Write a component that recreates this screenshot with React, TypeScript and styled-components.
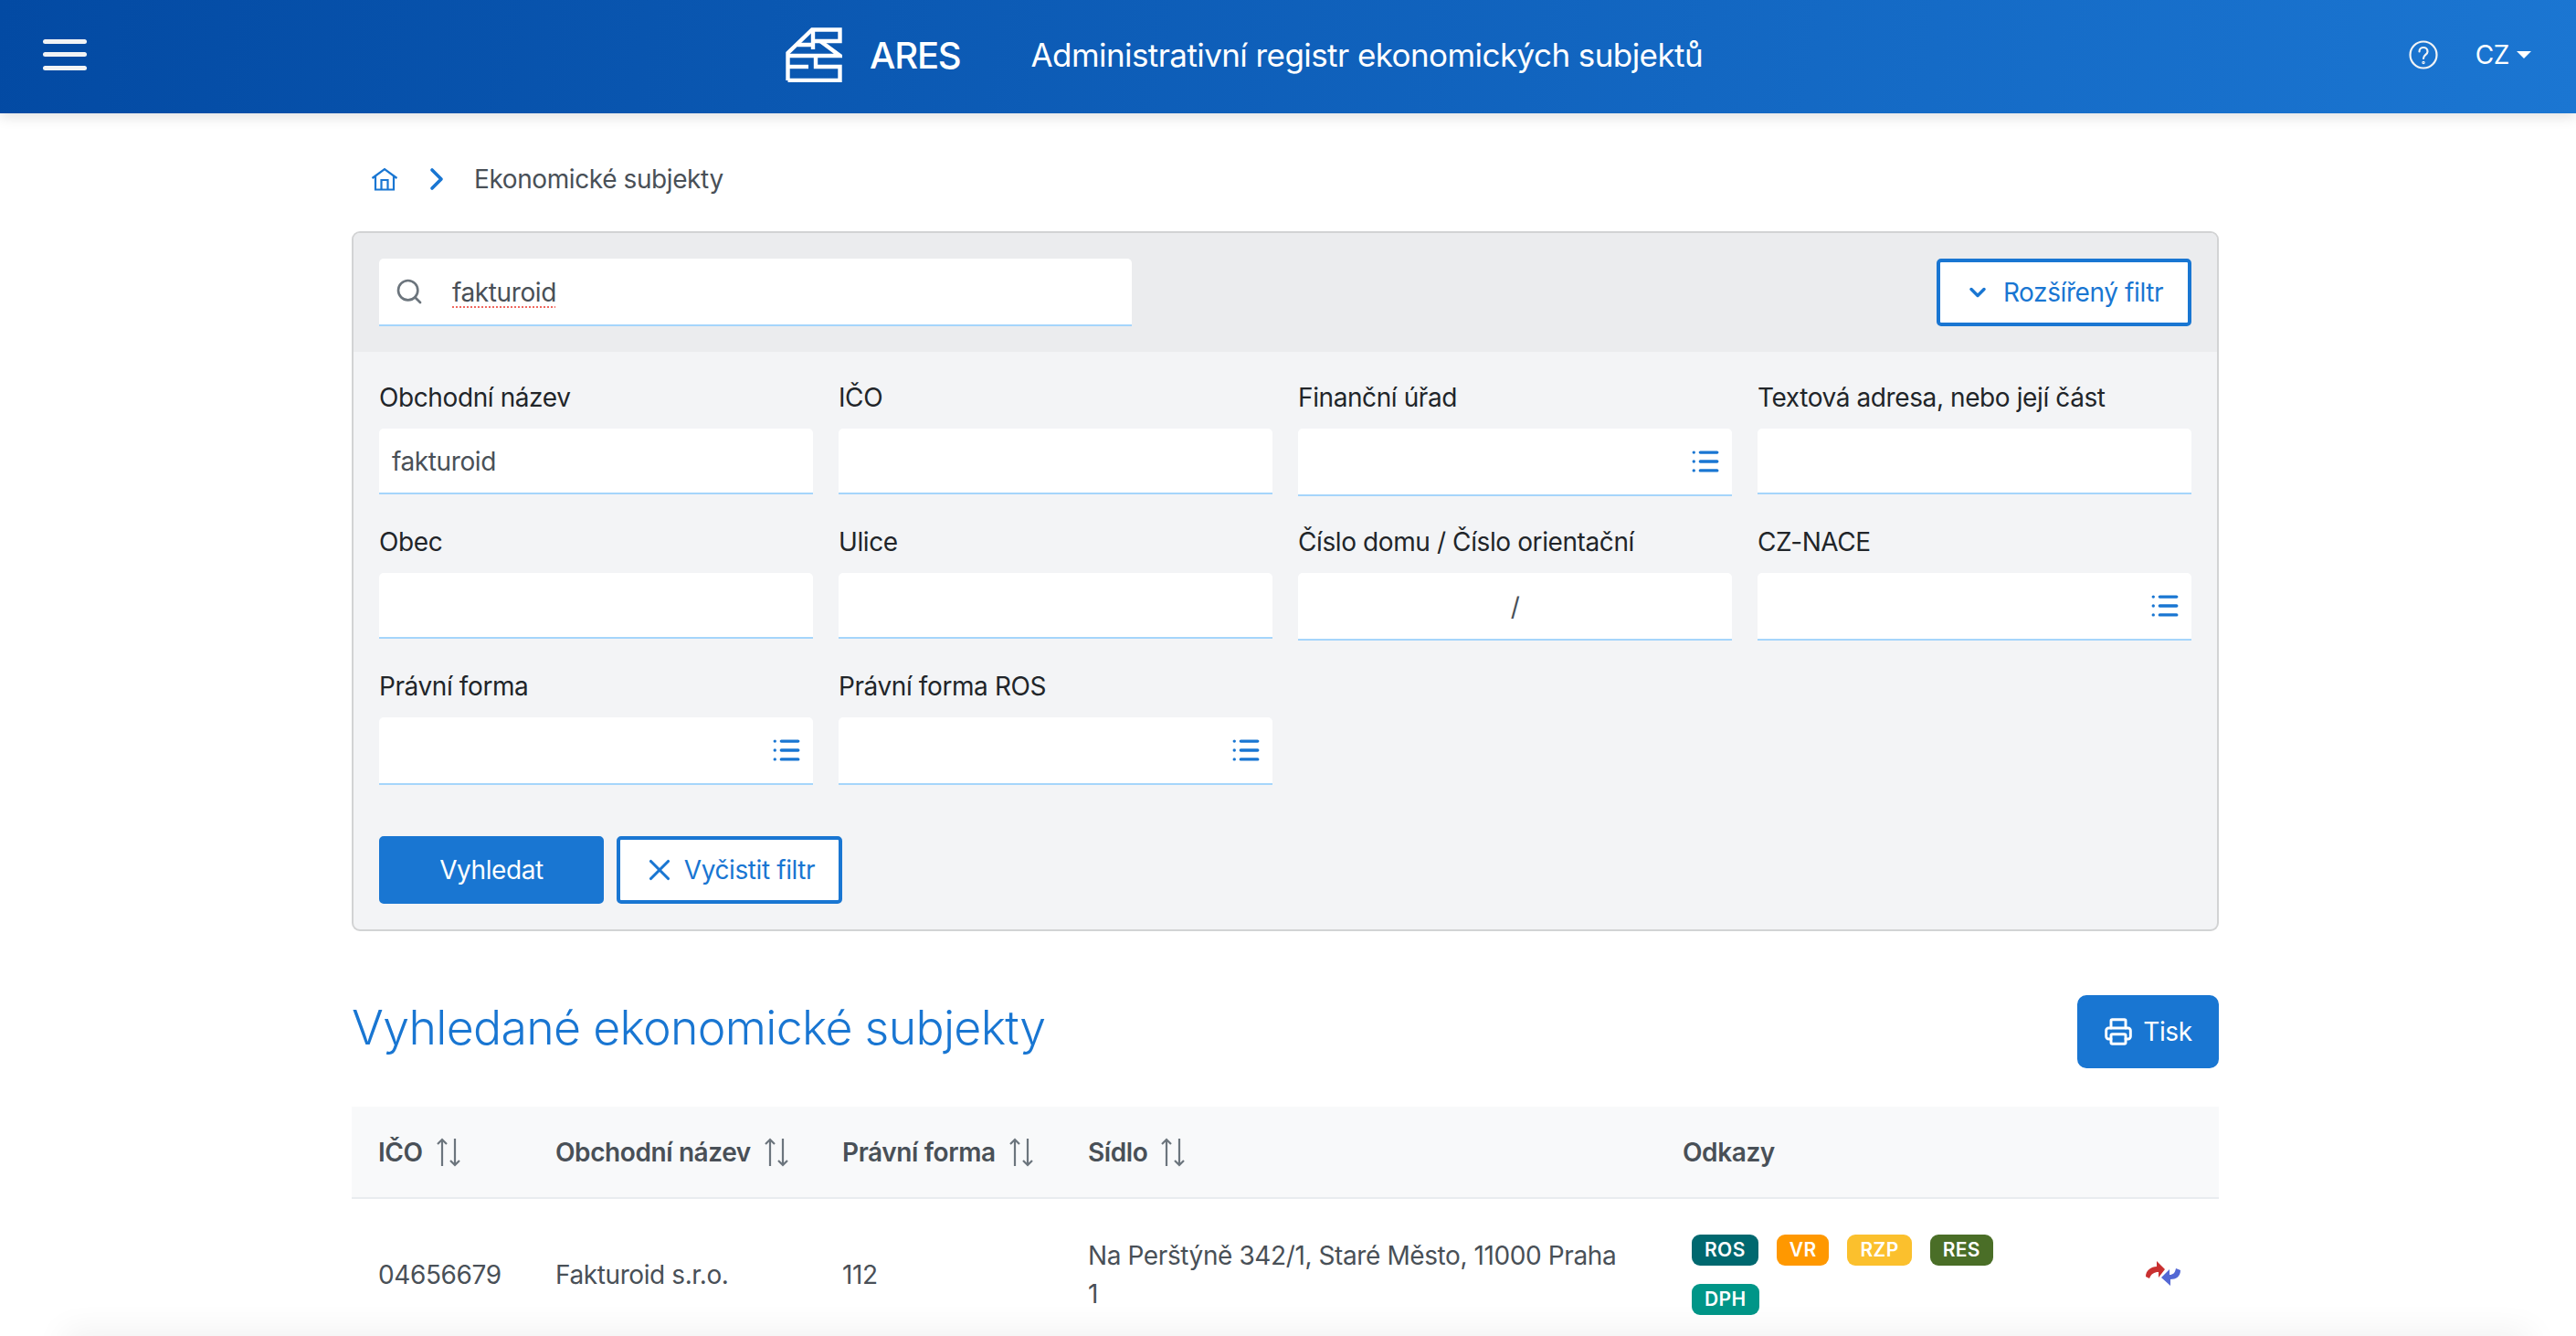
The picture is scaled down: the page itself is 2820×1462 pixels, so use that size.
import { FC } from "react";
import styled, { createGlobalStyle } from "styled-components";
import { ChevronDown, ChevronRight, List, Printer, Search, X } from "lucide-react";

const GlobalStyle = createGlobalStyle`
    html, body {
        margin: 0;
        height: 100%;
        overflow: hidden;
        background: #fff;
    }

    body {
        font-family: Inter, "Noto Sans", sans-serif;
        font-size: 28px;
        letter-spacing: -0.4px;
        color: #495057;
    }

    * {
        box-sizing: border-box;
    }
`

const Header = styled.header`
    height: 124px;
    padding-bottom: 5px;
    display: flex;
    align-items: center;
    background: linear-gradient(100deg, #034aa3 0%, #1b76d2 100%);
    box-shadow: 0 4px 14px rgba(0, 0, 0, 0.12);
    color: #fff;
    position: relative;
`

const MenuButton = styled.button`
    width: 48px;
    height: 34px;
    margin-left: 47px;
    padding: 0;
    display: flex;
    flex-direction: column;
    justify-content: space-between;
    background: none;
    border: 0;

    span {
        height: 5px;
        border-radius: 3px;
        background: #f1f3f5;
    }
`

const Brand = styled.div`
    display: flex;
    align-items: center;
    margin-left: 765px;
`

const BrandName = styled.span`
    margin: 2px 0 0 30px;
    font-size: 40px;
    font-weight: 500;
    letter-spacing: -1.2px;
`

const BrandTitle = styled.span`
    margin-left: 77px;
    font-size: 35px;
    font-weight: 400;
    letter-spacing: -0.57px;
`

const HeaderRight = styled.div`
    margin-left: auto;
    display: flex;
    align-items: center;
    padding-right: 49px;
`

const Lang = styled.span`
    margin-left: 41px;
    display: flex;
    align-items: center;

    &::after {
        content: "";
        margin-left: 8px;
        border-top: 8px solid #fff;
        border-left: 8px solid transparent;
        border-right: 8px solid transparent;
    }
`

const Main = styled.main`
    width: 2044px;
    margin-left: 385px;
`

const Breadcrumbs = styled.nav`
    height: 129px;
    padding: 14px 0 0 21px;
    display: flex;
    align-items: center;
    color: #1976d2;
`

const CrumbArrow = styled(ChevronRight)`
    margin-left: 22px;
`

const Crumb = styled.span`
    margin-left: 21px;
    color: #495057;
`

const Panel = styled.section`
    height: 766px;
    background: #f3f4f6;
    border: 2px solid #d2d3d4;
    border-radius: 9px;
    overflow: hidden;
`

const PanelTop = styled.div`
    height: 130px;
    padding: 28px 28px 0;
    display: flex;
    justify-content: space-between;
    align-items: flex-start;
    background: #ebecee;
`

const SearchBox = styled.div`
    width: 824px;
    height: 74px;
    padding-left: 17px;
    display: flex;
    align-items: center;
    background: #fff;
    border-bottom: 2px solid #a5d5fb;
    border-radius: 5px 5px 0 0;
    color: #6c757d;
`

const SearchText = styled.span`
    margin: 2px 0 0 31px;
    color: #495057;
    text-decoration: underline dotted #f0685f 2px;
    text-underline-offset: 5px;
`

const PanelBody = styled.div`
    padding: 28px 28px 0;
`

const FieldGrid = styled.div`
    display: grid;
    grid-template-columns: repeat(4, 475px);
    column-gap: 28px;
    grid-auto-rows: 158px;
`

const Field = styled.div`
    display: flex;
    flex-direction: column;
`

const Label = styled.label`
    height: 44px;
    margin-bottom: 12px;
    display: flex;
    align-items: center;
    color: #212529;
`

const Input = styled.div<{ $center?: boolean }>`
    height: ${({ $center }) => ($center ? "74px" : "72px")};
    padding: 2px 14px 0;
    display: flex;
    align-items: center;
    justify-content: ${({ $center }) => ($center ? "center" : "flex-start")};
    background: #fff;
    border-bottom: 2px solid #a5d5fb;
    border-radius: 5px 5px 0 0;
    color: #495057;
`

const ListInput = styled(Input)`
    height: 74px;
    padding: 0 12px 0 0;
    justify-content: flex-end;
    color: #1976d2;
`

const Actions = styled.div`
    display: flex;
    gap: 14px;
    margin-top: 28px;
`

const Button = styled.button<{ $outline?: boolean }>`
    height: 74px;
    display: flex;
    align-items: center;
    justify-content: center;
    font: inherit;
    letter-spacing: inherit;
    color: ${({ $outline }) => ($outline ? "#1976d2" : "#fff")};
    background: ${({ $outline }) => ($outline ? "#fff" : "#1976d2")};
    border: 4px solid #1976d2;
    border-radius: 5px;
    padding: 0;
`

const SearchButton = styled(Button)`
    width: 246px;
`

const ClearButton = styled(Button)`
    width: 247px;
    gap: 8px;
    padding-right: 2px;
`

const ExpandButton = styled(Button)`
    width: 279px;
    gap: 14px;
`

const ResultsHead = styled.div`
    height: 192px;
    display: flex;
    align-items: flex-start;
    justify-content: space-between;
    padding-top: 70px;
`

const Heading = styled.h2`
    margin: -1px 0 0;
    font-size: 51.8px;
    font-weight: 300;
    letter-spacing: -0.7px;
    color: #1976d2;
    line-height: 72px;
`

const PrintButton = styled(Button)`
    width: 155px;
    height: 80px;
    border-radius: 10px;
    gap: 11px;
`

const Table = styled.table`
    width: 2044px;
    table-layout: fixed;
    border-collapse: collapse;
`

const Th = styled.th<{ $width: number }>`
    width: ${({ $width }) => $width}px;
    height: 100px;
    padding: 0 29px;
    text-align: left;
    white-space: nowrap;
    font-weight: 600;
    background: #f8f9fa;
    border-bottom: 2px solid #e9ecef;
`

const ThInner = styled.span`
    display: inline-flex;
    align-items: center;
    gap: 13px;
`

const Td = styled.td`
    height: 166px;
    padding: 0 29px;
    line-height: 42px;
`

const Badges = styled.div`
    display: flex;
    flex-wrap: wrap;
    gap: 20px;
    padding-left: 10px;
`

const Badge = styled.span<{ $bg: string }>`
    height: 34px;
    padding: 0 14px;
    display: inline-flex;
    align-items: center;
    font-size: 21px;
    font-weight: 600;
    letter-spacing: 0.4px;
    color: #fff;
    background: ${({ $bg }) => $bg};
    border-radius: 9px;
`

const SwapCell = styled(Td)`
    padding: 6px 40px 0 0;
    text-align: right;
`

const BottomFade = styled.div`
    position: fixed;
    left: 70px;
    right: 50px;
    bottom: -30px;
    height: 30px;
    box-shadow: 0 -4px 36px rgba(0, 0, 0, 0.07);
`

const LogoMark: FC = () => (
    <svg width="62" height="60" viewBox="0 0 62 60" fill="none" stroke="#fff" strokeWidth="4.4">
        <path d="M2.5 58V28L29 2.5H59.5V15H30" />
        <path d="M30 2.5V24M13 19H28" />
        <path d="M38 15L59.5 31H2.5" />
        <path d="M33 31V43H59.5V58H2.5" />
        <path d="M2.5 43H25" />
    </svg>
);

const HomeIcon: FC = () => (
    <svg width="30" height="26" viewBox="0 0 30 26" fill="none" stroke="#1976d2" strokeWidth="2.2">
        <path d="M1.5 12L15 2L28.5 12" />
        <path d="M5 10V24.5H25V10" />
        <path d="M11.5 24V14H18.5V24" />
    </svg>
);

const SortIcon: FC = () => (
    <svg width="30" height="32" viewBox="0 0 30 32" fill="none" stroke="#6c757d" strokeWidth="2.2">
        <path d="M8 31V2M3 7L8 2L13 7" />
        <path d="M22 1V30M17 25L22 30L27 25" />
    </svg>
);

const HelpIcon: FC = () => (
    <svg width="32" height="32" viewBox="0 0 32 32" fill="none" stroke="#f1f3f5" strokeWidth="2.2" strokeLinecap="round">
        <circle cx="16" cy="16" r="14.5" />
        <path d="M11.5 12.5C11.5 6.5 20.5 6.5 20.5 12.5C20.5 16 16 16 16 20" />
        <circle cx="16" cy="24.5" r="0.6" />
    </svg>
);

const SwapIcon: FC = () => (
    <svg width="42" height="30" viewBox="0 0 42 30">
        <path d="M2 19C2 12 8 8 14 8V2L23 11L16 20V14C11 14 8 16 6 21Z" fill="#c93030" />
        <path d="M40 12C40 19 35 22 29 22V29L19 20L28 11V17C32 17 34 15 35 10Z" fill="#5468d4" />
    </svg>
);

const fields = [
    { label: "Obchodní název", value: "fakturoid" },
    { label: "IČO" },
    { label: "Finanční úřad", list: true },
    { label: "Textová adresa, nebo její část" },
    { label: "Obec" },
    { label: "Ulice" },
    { label: "Číslo domu / Číslo orientační", value: "/", center: true },
    { label: "CZ-NACE", list: true },
    { label: "Právní forma", list: true },
    { label: "Právní forma ROS", list: true },
];

const columns = [
    { title: "IČO", width: 194, sort: true },
    { title: "Obchodní název", width: 314, sort: true },
    { title: "Právní forma", width: 269, sort: true },
    { title: "Sídlo", width: 651, sort: true },
    { title: "Odkazy", width: 456 },
    { title: "", width: 160 },
];

const badges = [
    { text: "ROS", color: "#00686f" },
    { text: "VR", color: "#ff9800" },
    { text: "RZP", color: "#fbc02d" },
    { text: "RES", color: "#4a6e27" },
    { text: "DPH", color: "#009688" },
];

const App: FC = () => {
    return (
        <>
            <GlobalStyle />
            <Header>
                <MenuButton>
                    <span />
                    <span />
                    <span />
                </MenuButton>
                <Brand>
                    <LogoMark />
                    <BrandName>ARES</BrandName>
                    <BrandTitle>Administrativní registr ekonomických subjektů</BrandTitle>
                </Brand>
                <HeaderRight>
                    <HelpIcon />
                    <Lang>CZ</Lang>
                </HeaderRight>
            </Header>

            <Main>
                <Breadcrumbs>
                    <HomeIcon />
                    <CrumbArrow size={40} strokeWidth={2.2} />
                    <Crumb>Ekonomické subjekty</Crumb>
                </Breadcrumbs>

                <Panel>
                    <PanelTop>
                        <SearchBox>
                            <Search size={32} strokeWidth={2} />
                            <SearchText>fakturoid</SearchText>
                        </SearchBox>
                        <ExpandButton $outline>
                            <ChevronDown size={28} strokeWidth={3} />
                            Rozšířený filtr
                        </ExpandButton>
                    </PanelTop>

                    <PanelBody>
                        <FieldGrid>
                            {fields.map((field) => (
                                <Field key={field.label}>
                                    <Label>{field.label}</Label>
                                    {field.list ? (
                                        <ListInput>
                                            <List size={34} strokeWidth={2.4} />
                                        </ListInput>
                                    ) : (
                                        <Input $center={field.center}>{field.value}</Input>
                                    )}
                                </Field>
                            ))}
                        </FieldGrid>

                        <Actions>
                            <SearchButton>Vyhledat</SearchButton>
                            <ClearButton $outline>
                                <X size={38} strokeWidth={2} />
                                Vyčistit filtr
                            </ClearButton>
                        </Actions>
                    </PanelBody>
                </Panel>

                <ResultsHead>
                    <Heading>Vyhledané ekonomické subjekty</Heading>
                    <PrintButton>
                        <Printer size={32} strokeWidth={2.2} />
                        Tisk
                    </PrintButton>
                </ResultsHead>

                <Table>
                    <thead>
                        <tr>
                            {columns.map((column) => (
                                <Th key={column.title} $width={column.width}>
                                    <ThInner>
                                        {column.title}
                                        {column.sort && <SortIcon />}
                                    </ThInner>
                                </Th>
                            ))}
                        </tr>
                    </thead>
                    <tbody>
                        <tr>
                            <Td>04656679</Td>
                            <Td>Fakturoid s.r.o.</Td>
                            <Td>112</Td>
                            <Td>Na Perštýně 342/1, Staré Město, 11000 Praha 1</Td>
                            <Td>
                                <Badges>
                                    {badges.map((badge) => (
                                        <Badge key={badge.text} $bg={badge.color}>{badge.text}</Badge>
                                    ))}
                                </Badges>
                            </Td>
                            <SwapCell>
                                <SwapIcon />
                            </SwapCell>
                        </tr>
                    </tbody>
                </Table>
            </Main>
            <BottomFade />
        </>
    );
}

export default App;
